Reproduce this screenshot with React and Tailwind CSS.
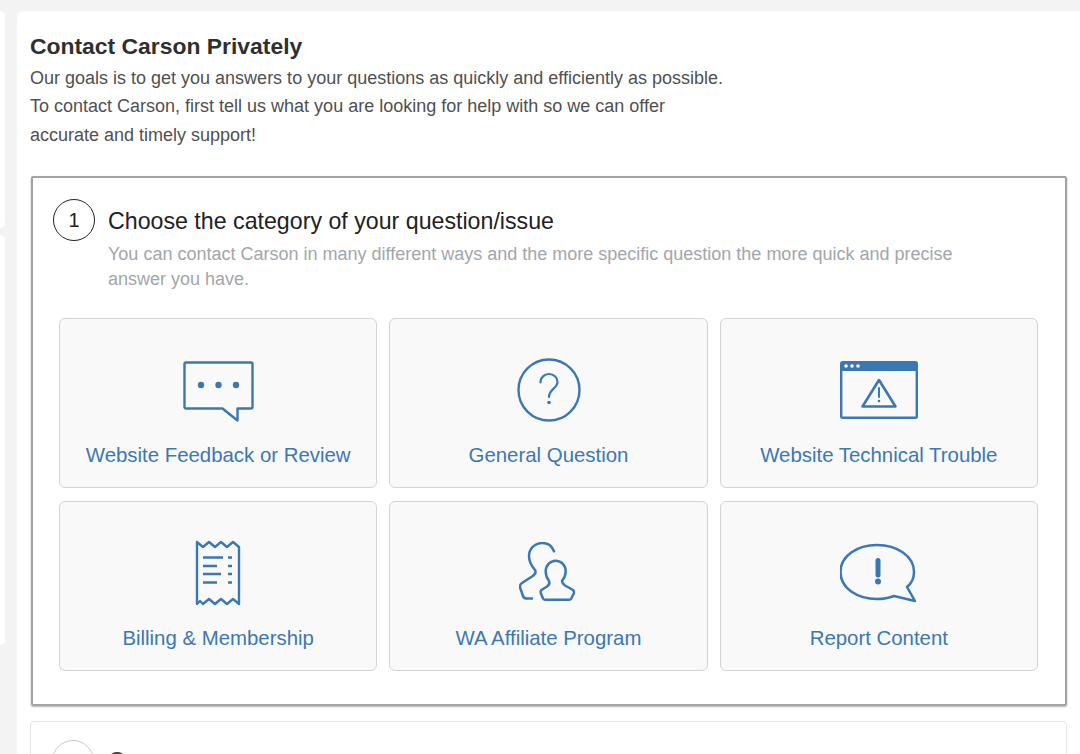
const TILES = [
  { label: "Website Feedback or Review", icon: ChatIcon },
  { label: "General Question", icon: QuestionIcon },
  { label: "Website Technical Trouble", icon: WindowIcon },
  { label: "Billing & Membership", icon: ReceiptIcon },
  { label: "WA Affiliate Program", icon: PeopleIcon },
  { label: "Report Content", icon: ReportIcon },
];

function ChatIcon() {
  return (
    <svg width="72" height="64" viewBox="0 -2 72 64" fill="none" stroke="#3b78b3" strokeWidth="2.4" strokeLinejoin="round">
      <path d="M4 2.500h65a1.500 1.500 0 0 1 1.500 1.500v43a1.500 1.500 0 0 1-1.500 1.500h-13.500v12l-15-12h-36.500a1.500 1.500 0 0 1-1.500-1.500v-43a1.500 1.500 0 0 1 1.500-1.500z" />
      <g fill="#3b78b3" stroke="none">
        <circle cx="19" cy="25" r="3.200" />
        <circle cx="36.500" cy="25" r="3.200" />
        <circle cx="54" cy="25" r="3.200" />
      </g>
    </svg>
  );
}

function QuestionIcon() {
  return (
    <svg width="66" height="64" viewBox="-2 0 66 64" fill="none" stroke="#3b78b3" strokeLinecap="round">
      <circle cx="32" cy="32" r="30.500" strokeWidth="2.4" />
      <path d="M23.500 24.500c0-5 3.800-8.500 8.500-8.500s8.500 3.500 8.500 8c0 6.500-8.500 7-8.500 15" strokeWidth="2.2" />
      <circle cx="32" cy="44.500" r="1.800" fill="#3b78b3" stroke="none" />
    </svg>
  );
}

function WindowIcon() {
  return (
    <svg width="78" height="58" viewBox="0 0 78 58" fill="none" stroke="#3b78b3" strokeLinejoin="round">
      <rect x="1.200" y="1.200" width="75.600" height="55.600" rx="1.500" strokeWidth="2.4" />
      <rect x="1" y="1" width="76" height="9" fill="#3b78b3" stroke="none" />
      <g fill="#fff" stroke="none">
        <circle cx="6" cy="5" r="1.800" />
        <circle cx="12" cy="5" r="1.800" />
        <circle cx="18" cy="5" r="1.800" />
      </g>
      <path d="M39 19l16.500 26.500h-33z" strokeWidth="2.600" />
      <path d="M39 27v9" strokeWidth="2" strokeLinecap="round" />
      <circle cx="39" cy="40" r="1.300" fill="#3b78b3" stroke="none" />
    </svg>
  );
}

function ReceiptIcon() {
  return (
    <svg width="48" height="66" viewBox="0 0 48 66" fill="none" stroke="#3b78b3" strokeWidth="2.400">
      <path d="M3 2l6 5 6-5 6 5 6-5 6 5 6-5 6 5V64l-6-5-6 5-6-5-6 5-6-5-6 5-3-3L3 64z" strokeLinejoin="round" />
      <path d="M9 17.500h20M9 26h14M9 34h18M9 42.500h14M34 17.500h4M34 26h4M34 34h4M34 42.500h4" />
    </svg>
  );
}

function PeopleIcon() {
  return (
    <svg width="58" height="62" viewBox="0 0 58 62" fill="none" stroke="#3b78b3" strokeWidth="2.500" strokeLinecap="round" strokeLinejoin="round">
      <path d="M35 9.300C33 4 28.500 1 23.300 1C15.500 1 10 7 10 14.300C10 20 13 24.500 16 28C17.500 30.500 16 32.500 13 34.500L3 41C1.500 42 .7 44 1.200 46L4 54C4.700 56 6 56.500 8 56.500H13" />
      <path d="M36.700 18.700C31 18.700 26.700 23.500 26.700 29.300C26.700 33.500 28 36.500 30 39C31 41 30 43 28 44.500L22.500 48C21.500 49 21.300 50 21.700 51L24 56.500C24.300 57.500 25 57.700 26 57.700H50.500C51.500 57.700 52 57.500 52.300 56.500L55 51C55.300 50 55 49 54 48L46 43.500C44 42 43 41 43 39C45 36.500 46.700 33.500 46.700 29.300C46.700 23.500 42.500 18.700 36.700 18.700Z" />
    </svg>
  );
}

function ReportIcon() {
  return (
    <svg width="78" height="60" viewBox="1 0 78 60" fill="none" stroke="#3b78b3" strokeWidth="2.500" strokeLinejoin="round">
      <path d="M38 2c20 0 37 11 37 27 0 6-2 11-7 15l8 14-21-5c-5 2-11 3-17 3C18 56 1.500 45 1.500 29S18 2 38 2z" />
      <path d="M39 17.500v14.500" strokeWidth="5" strokeLinecap="round" />
      <circle cx="39" cy="38.500" r="3" fill="#3b78b3" stroke="none" />
    </svg>
  );
}

function StepCircle({ n, muted }) {
  return (
    <div
      className={`flex h-[42px] w-[42px] shrink-0 items-center justify-center rounded-full border text-[20px] ${
        muted ? "border-[#c9c9c9] text-[#999]" : "border-[#222] text-[#222]"
      }`}
    >
      {n}
    </div>
  );
}

export default function App() {
  return (
    <div className="flex h-[754px] overflow-hidden bg-[#f3f3f3] pt-[11px] font-['Liberation_Sans',Arial,sans-serif]">
      <div className="flex w-[5px] shrink-0 flex-col gap-[7px]">
        <div className="h-[217px] rounded-r-md bg-white" />
        <div className="h-[410px] rounded-r-md bg-white" />
      </div>

      <div className="ml-3 min-w-0 flex-1 rounded-tl-md bg-white pl-[13px] pr-[13px] pt-[20px]">
        <h1 className="text-[22.900px] leading-[30px] font-bold text-[#2f2f2f]">Contact Carson Privately</h1>
        <p className="mt-[3px] w-[720px] text-[18px] leading-[28.300px] text-[#505050]">
          Our goals is to get you answers to your questions as quickly and efficiently as possible.
          <br />
          To contact Carson, first tell us what you are looking for help with so we can offer
          <br />
          accurate and timely support!
        </p>

        <section className="mt-[27px] ml-px h-[530px] w-[1036px] rounded-[2px] border-2 border-[#a3a3a3] pt-[21px] pr-[27px] pl-[20px] shadow-[0_1px_2px_rgba(0,0,0,0.3)]">
          <div className="flex gap-[13px]">
            <StepCircle n="1" />
            <div className="pt-[7px]">
              <h2 className="text-[23.200px] leading-[30px] text-[#222]">Choose the category of your question/issue</h2>
              <p className="mt-[6px] w-[880px] text-[18px] leading-[25.500px] text-[#a2a6ab]">
                You can contact Carson in many different ways and the more specific question the more quick and precise answer you have.
              </p>
            </div>
          </div>

          <div className="mt-[25px] ml-[6px] grid grid-cols-3 gap-x-[12px] gap-y-[12.500px]">
            {TILES.map(({ label, icon: Icon }) => (
              <button
                key={label}
                type="button"
                className="flex h-[170.500px] flex-col items-center rounded-md border-[1.500px] border-[#d4d4d4] bg-[#f9f9f9] text-[20.400px] text-[#3b78b3]"
              >
                <div className="flex h-[122px] w-full items-center justify-center pt-[20px]">
                  <Icon />
                </div>
                <span className="leading-[28px]">{label}</span>
              </button>
            ))}
          </div>
        </section>

        <section className="mt-[15px] h-[200px] w-[1037px] rounded-[4px] border border-[#e6e6e6] pt-[18px] pl-[21px]">
          <div className="flex items-start gap-[14px]">
            <StepCircle n="2" muted />
            <h2 className="pt-[6px] text-[23.200px] leading-[30px] text-[#444]">Compose message</h2>
          </div>
        </section>
      </div>
    </div>
  );
}
